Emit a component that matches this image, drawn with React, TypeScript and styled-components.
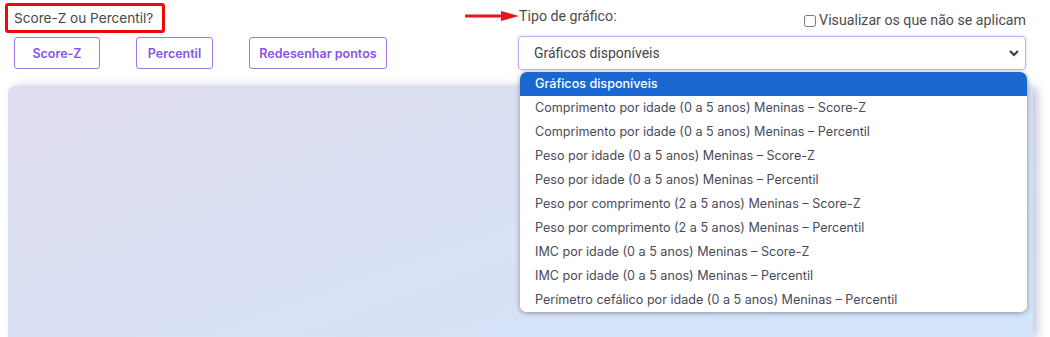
import React, { useState } from 'react';
import styled, { createGlobalStyle } from 'styled-components';

const GlobalStyle = createGlobalStyle`
    html, body {
        margin: 0;
        padding: 0;
        background: #ffffff;
        font-family: Inter, "Noto Sans", sans-serif;
    }
`;

const chartOptions = [
    'Comprimento por idade (0 a 5 anos) Meninas – Score-Z',
    'Comprimento por idade (0 a 5 anos) Meninas – Percentil',
    'Peso por idade (0 a 5 anos) Meninas – Score-Z',
    'Peso por idade (0 a 5 anos) Meninas – Percentil',
    'Peso por comprimento (2 a 5 anos) Meninas – Score-Z',
    'Peso por comprimento (2 a 5 anos) Meninas – Percentil',
    'IMC por idade (0 a 5 anos) Meninas – Score-Z',
    'IMC por idade (0 a 5 anos) Meninas – Percentil',
    'Perímetro cefálico por idade (0 a 5 anos) Meninas – Percentil',
];

const App: React.FC = () => {
    const [showAll, setShowAll] = useState(false);

    return (
        <Page>
            <GlobalStyle />
            <Toolbar>
                <LeftColumn>
                    <ModeLabel>Score-Z ou Percentil?</ModeLabel>
                    <ButtonRow>
                        <OutlineButton width={86}>Score-Z</OutlineButton>
                        <OutlineButton width={77}>Percentil</OutlineButton>
                        <OutlineButton width={138}>Redesenhar pontos</OutlineButton>
                    </ButtonRow>
                </LeftColumn>
                <RightColumn>
                    <LabelRow>
                        <ChartLabel>
                            <Pointer width="54" height="10" viewBox="0 0 54 10">
                                <path d="M0 5 H40" stroke="#e8141b" strokeWidth="3" />
                                <path d="M36 0 L54 5 L36 10 Z" fill="#e8141b" />
                            </Pointer>
                            Tipo de gráfico:
                        </ChartLabel>
                        <CheckLabel>
                            <CheckBox checked={showAll} onChange={() => setShowAll(!showAll)} />
                            Visualizar os que não se aplicam
                        </CheckLabel>
                    </LabelRow>
                    <SelectBox>
                        <span>Gráficos disponíveis</span>
                        <svg width="12" height="8" viewBox="0 0 12 8">
                            <path d="M2 2 L6 6 L10 2" stroke="#3d3d3d" strokeWidth="2.2" fill="none" />
                        </svg>
                        <OptionList>
                            <OptionItem active>Gráficos disponíveis</OptionItem>
                            {chartOptions.map((opt) => (
                                <OptionItem key={opt}>{opt}</OptionItem>
                            ))}
                        </OptionList>
                    </SelectBox>
                </RightColumn>
            </Toolbar>
            <ChartPanel />
        </Page>
    );
};
export default App;

const Page = styled.div`
    width: 1050px;
    height: 337px;
    overflow: hidden;
    display: flex;
    flex-direction: column;
`;

const Toolbar = styled.div`
    display: flex;
    height: 86px;
    position: relative;
    z-index: 2;
`;

const LeftColumn = styled.div`
    width: 518px;
    padding: 3px 0 0 5px;
    box-sizing: border-box;
    display: flex;
    flex-direction: column;
    gap: 4px;
`;

const ModeLabel = styled.div`
    align-self: flex-start;
    width: 160px;
    height: 30px;
    box-sizing: border-box;
    border: 3px solid #ee0a0a;
    border-radius: 3px;
    padding: 0 0 0 6px;
    font-size: 13.6px;
    line-height: 24px;
    color: #474747;
`;

const ButtonRow = styled.div`
    display: flex;
    gap: 36px;
    padding-left: 9px;
`;

const OutlineButton = styled.button<{ width: number }>`
    width: ${props => props.width}px;
    height: 32px;
    background: #ffffff;
    border: 1px solid #a277ec;
    border-radius: 3px;
    color: #8654ea;
    font-family: Inter, "Noto Sans", sans-serif;
    font-size: 12.5px;
    font-weight: 600;
    padding: 0;
`;

const RightColumn = styled.div`
    width: 508px;
    display: flex;
    flex-direction: column;
`;

const LabelRow = styled.div`
    display: flex;
    justify-content: space-between;
    height: 36px;
    font-family: Roboto, "Noto Sans", sans-serif;
    font-size: 14.2px;
    color: #4b4b4b;
`;

const ChartLabel = styled.div`
    position: relative;
    padding: 8px 0 0 1px;
`;

const Pointer = styled.svg`
    position: absolute;
    left: -53px;
    top: 11px;
`;

const CheckLabel = styled.label`
    display: flex;
    align-items: center;
    gap: 3px;
    height: 20px;
    margin-top: 10px;
`;

const CheckBox = styled.input.attrs({ type: 'checkbox' })`
    width: 12px;
    height: 12px;
    margin: 2px 0 0 0;
    accent-color: #666;
`;

const SelectBox = styled.div`
    position: relative;
    height: 34px;
    box-sizing: border-box;
    border: 1px solid #c9a8f4;
    border-radius: 4px;
    box-shadow: 0 0 3px rgba(170, 120, 240, 0.35);
    display: flex;
    align-items: center;
    justify-content: space-between;
    padding: 0 5px 0 15px;
    font-family: Roboto, "Noto Sans", sans-serif;
    font-size: 14px;
    color: #464646;
`;

const OptionList = styled.div`
    position: absolute;
    top: 35px;
    left: 1px;
    width: 507px;
    background: #ffffff;
    border-radius: 7px;
    overflow: hidden;
    box-shadow: 0 1px 5px rgba(40, 40, 60, 0.45);
`;

const OptionItem = styled.div<{ active?: boolean }>`
    height: 24px;
    line-height: 24px;
    padding-left: 15px;
    font-family: Inter, "Noto Sans", sans-serif;
    font-size: 12.6px;
    font-weight: ${props => props.active ? 500 : 400};
    color: ${props => props.active ? '#ffffff' : '#4a4a58'};
    background: ${props => props.active ? '#1a67d2' : '#ffffff'};
    white-space: nowrap;
`;

const ChartPanel = styled.div`
    margin-left: 8px;
    width: 1025px;
    flex: 1;
    border-radius: 7px 7px 0 0;
    background: linear-gradient(160deg, #dfdcee 0%, #d9e0f4 45%, #d2e4fb 100%);
    box-shadow: 5px 0 9px rgba(110, 120, 170, 0.4);
`;
